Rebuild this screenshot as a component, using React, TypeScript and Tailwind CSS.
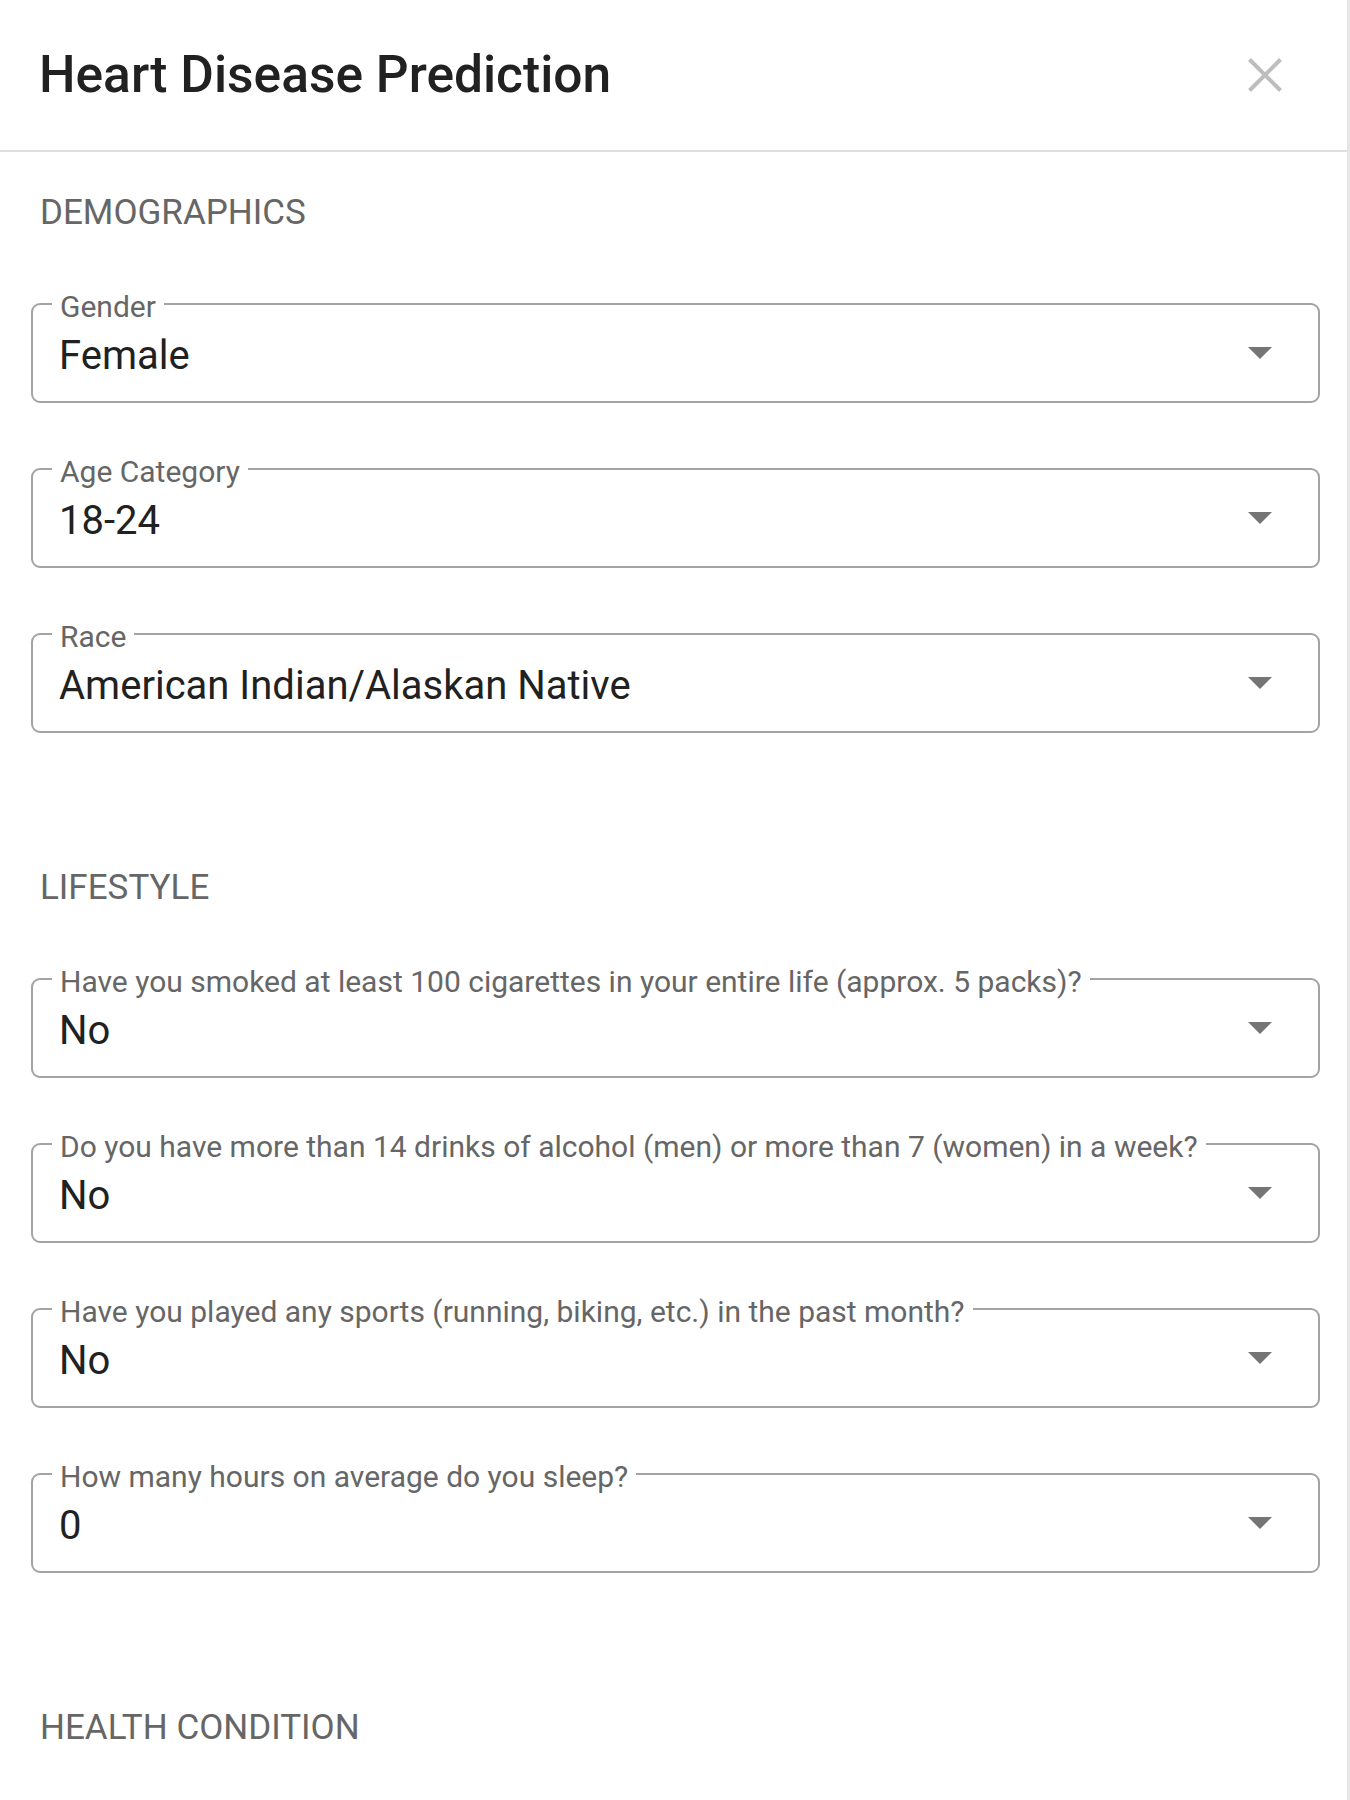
import React from "react";

interface Field {
  label: string;
  value: string;
}

interface Section {
  title: string;
  fields: Field[];
}

const SECTIONS: Section[] = [
  {
    title: "DEMOGRAPHICS",
    fields: [
      { label: "Gender", value: "Female" },
      { label: "Age Category", value: "18-24" },
      { label: "Race", value: "American Indian/Alaskan Native" },
    ],
  },
  {
    title: "LIFESTYLE",
    fields: [
      { label: "Have you smoked at least 100 cigarettes in your entire life (approx. 5 packs)?", value: "No" },
      { label: "Do you have more than 14 drinks of alcohol (men) or more than 7 (women) in a week?", value: "No" },
      { label: "Have you played any sports (running, biking, etc.) in the past month?", value: "No" },
      { label: "How many hours on average do you sleep?", value: "0" },
    ],
  },
  {
    title: "HEALTH CONDITION",
    fields: [],
  },
];

function CloseIcon() {
  return (
    <svg width="34" height="34" viewBox="0 0 34 34" fill="none">
      <line x1="1.5" y1="1.5" x2="32.5" y2="32.5" stroke="#bdbdbd" strokeWidth="4" />
      <line x1="32.5" y1="1.5" x2="1.5" y2="32.5" stroke="#bdbdbd" strokeWidth="4" />
    </svg>
  );
}

function SelectField({ label, value }: Field) {
  return (
    <div className="relative flex h-[100px] items-center justify-between rounded-[9px] border-2 border-[#a3a3a3] pl-[26px] pr-[46px] pt-[6px]">
      <span className="absolute left-[19px] top-[-13px] whitespace-nowrap bg-white px-2 text-[30px] leading-none text-[#666666]">
        {label}
      </span>
      <span className="text-[40px] leading-none text-[#212121]">{value}</span>
      <svg width="24" height="12" viewBox="0 0 24 12" className="mb-[6px]">
        <polygon points="0,0 24,0 12,12" fill="#757575" />
      </svg>
    </div>
  );
}

export default function App() {
  return (
    <div className="min-h-[1800px] w-full border-r-[3px] border-[#e6e6e6] bg-white font-['Roboto',sans-serif]">
      <header className="flex h-[152px] items-center justify-between border-b-2 border-[#dedede] pl-[39px] pr-[65px]">
        <h1 className="text-[51.5px] font-medium leading-none text-[#212121]">Heart Disease Prediction</h1>
        <button className="flex items-center justify-center">
          <CloseIcon />
        </button>
      </header>

      <main className="pl-[31px] pr-[27px]">
        {SECTIONS.map((section, i) => (
          <section key={section.title} className={i === 0 ? "mt-[43px]" : "mt-[137px]"}>
            <h2 className="pl-[9px] text-[35px] leading-none text-[#666666]">{section.title}</h2>
            {section.fields.length > 0 && (
              <div className="mt-[73px] flex flex-col gap-[65px]">
                {section.fields.map((f) => (
                  <SelectField key={f.label} label={f.label} value={f.value} />
                ))}
              </div>
            )}
          </section>
        ))}
      </main>
    </div>
  );
}
